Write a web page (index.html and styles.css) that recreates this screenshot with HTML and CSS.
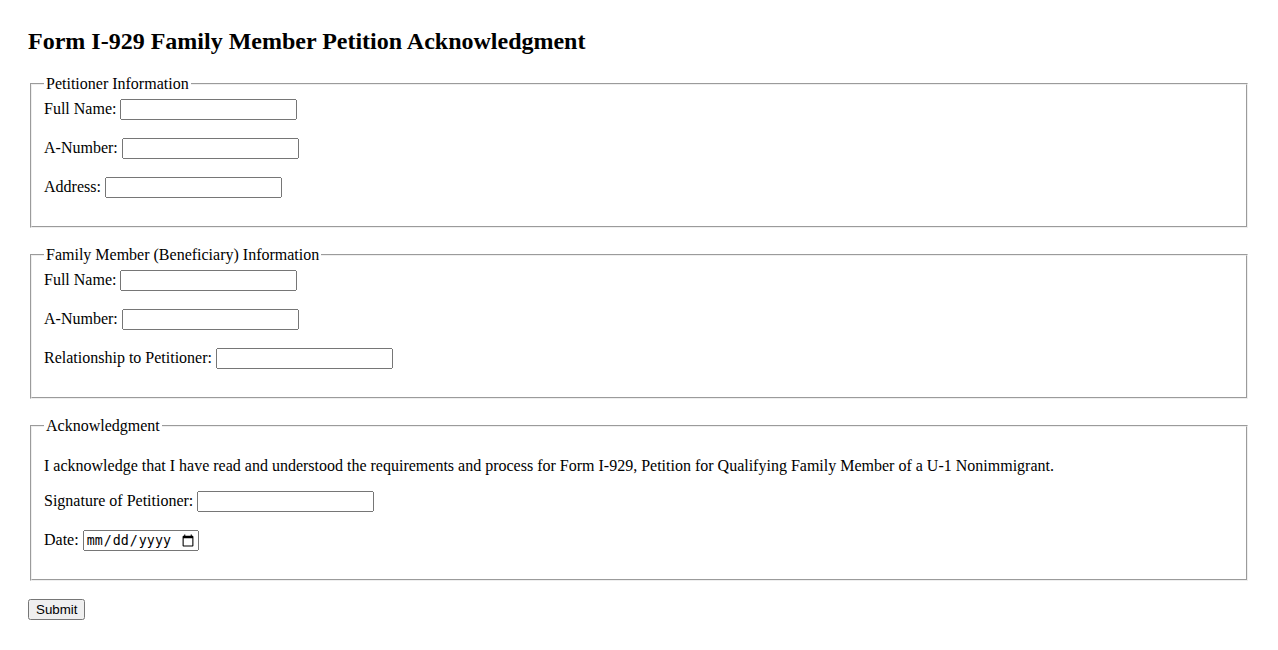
FILE: index.html
```html
<!DOCTYPE html>
<html lang="en">
<head>
<meta charset="utf-8">
<title>Form I-929 Family Member Petition Acknowledgment</title>
<link rel="stylesheet" href="styles.css">
</head>
<body>
<h2 class="title">Form I-929 Family Member Petition Acknowledgment</h2>
<form class="form">
  <fieldset class="section">
    <legend>Petitioner Information</legend>
    <div class="group"><label for="pname">Full Name:</label> <input type="text" id="pname" class="field"></div>
    <div class="group"><label for="pnum">A-Number:</label> <input type="text" id="pnum" class="field"></div>
    <div class="group"><label for="paddr">Address:</label> <input type="text" id="paddr" class="field"></div>
  </fieldset>
  <fieldset class="section">
    <legend>Family Member (Beneficiary) Information</legend>
    <div class="group"><label for="bname">Full Name:</label> <input type="text" id="bname" class="field"></div>
    <div class="group"><label for="bnum">A-Number:</label> <input type="text" id="bnum" class="field"></div>
    <div class="group"><label for="brel">Relationship to Petitioner:</label> <input type="text" id="brel" class="field"></div>
  </fieldset>
  <fieldset class="section">
    <legend>Acknowledgment</legend>
    <p class="statement">I acknowledge that I have read and understood the requirements and process for Form I-929, Petition for Qualifying Family Member of a U-1 Nonimmigrant.</p>
    <div class="group"><label for="sig">Signature of Petitioner:</label> <input type="text" id="sig" class="field"></div>
    <div class="group"><label for="date">Date:</label> <input type="date" id="date" class="date-field"></div>
  </fieldset>
  <button type="submit" class="submit">Submit</button>
</form>
</body>
</html>
```
FILE: styles.css
```css
body {
  margin: 8px;
  padding: 20px;
  font-family: "Liberation Serif", "Times New Roman", serif;
  font-size: 16px;
  color: #000;
  background: #fff;
}
.title {
  font-size: 24px;
  font-weight: bold;
  margin: 0 0 20px 0;
}
.section {
  margin: 0 2px 18px 2px;
  padding: 6px 12px 10px 12px;
}
.section legend {
  padding: 0 2px;
}
.group {
  margin-bottom: 18px;
}
.field {
  box-sizing: border-box;
  width: 177px;
  height: 21px;
}
.date-field {
  box-sizing: border-box;
  width: 116px;
  height: 21px;
}
.statement {
  margin: 16px 0;
}
.submit {
  display: block;
  margin-top: 1px;
  font-family: "Liberation Sans", Arial, sans-serif;
}
```
